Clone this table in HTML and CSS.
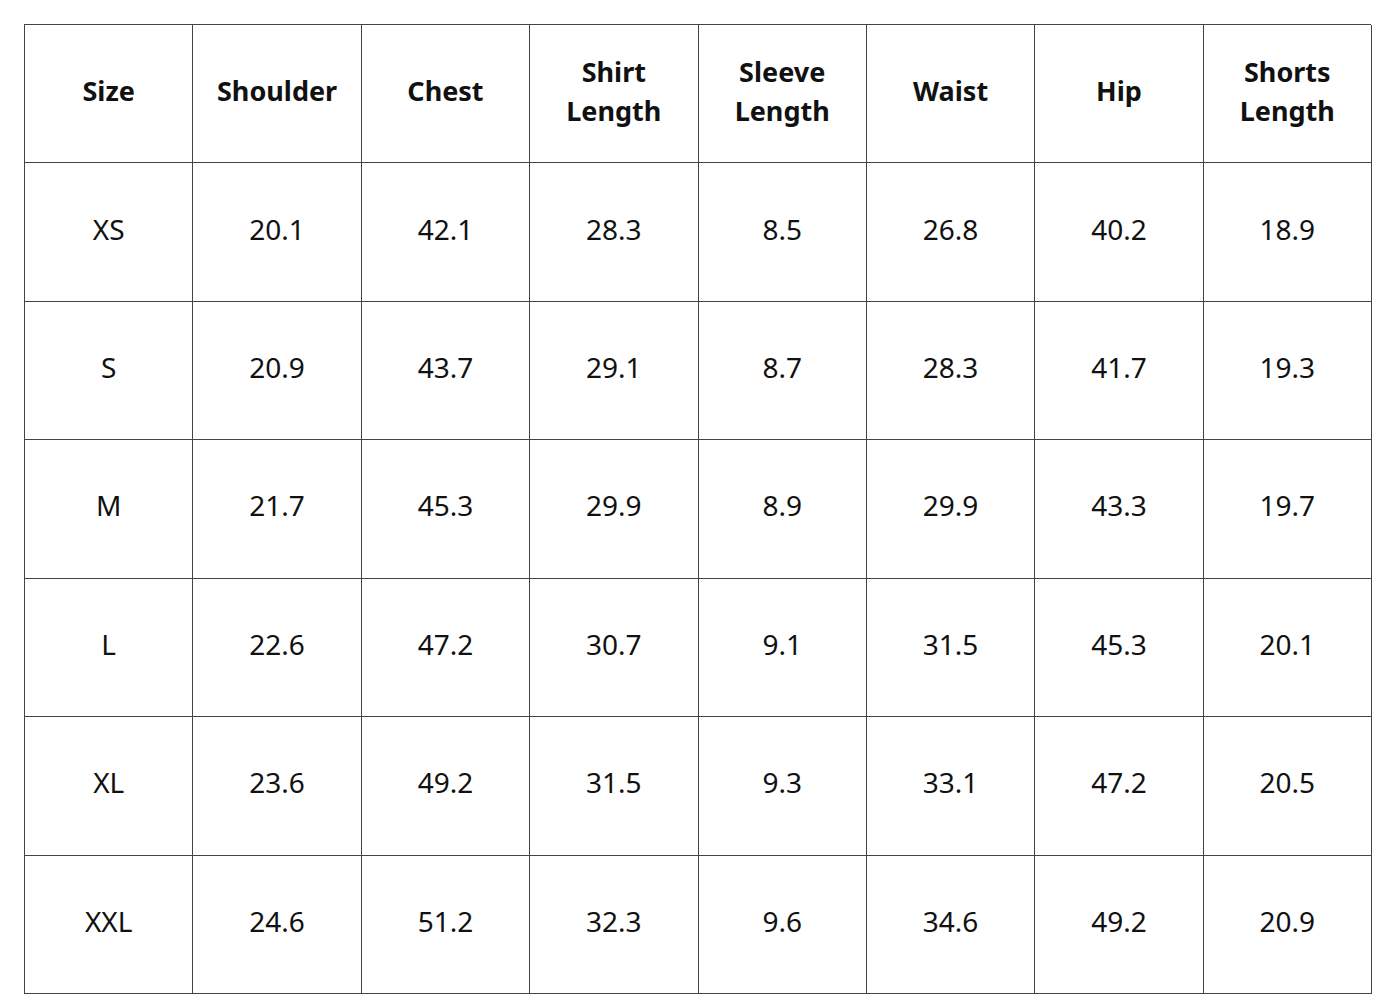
FILE: index.html
```html
<!DOCTYPE html>
<html>
<head>
<meta charset="utf-8">
<link rel="stylesheet" href="styles.css">
</head>
<body>
<div class="chart">
  <div class="cell head">Size</div>
  <div class="cell head">Shoulder</div>
  <div class="cell head">Chest</div>
  <div class="cell head">Shirt<br>Length</div>
  <div class="cell head">Sleeve<br>Length</div>
  <div class="cell head">Waist</div>
  <div class="cell head">Hip</div>
  <div class="cell head">Shorts<br>Length</div>

  <div class="cell">XS</div><div class="cell">20.1</div><div class="cell">42.1</div><div class="cell">28.3</div><div class="cell">8.5</div><div class="cell">26.8</div><div class="cell">40.2</div><div class="cell">18.9</div>
  <div class="cell">S</div><div class="cell">20.9</div><div class="cell">43.7</div><div class="cell">29.1</div><div class="cell">8.7</div><div class="cell">28.3</div><div class="cell">41.7</div><div class="cell">19.3</div>
  <div class="cell">M</div><div class="cell">21.7</div><div class="cell">45.3</div><div class="cell">29.9</div><div class="cell">8.9</div><div class="cell">29.9</div><div class="cell">43.3</div><div class="cell">19.7</div>
  <div class="cell">L</div><div class="cell">22.6</div><div class="cell">47.2</div><div class="cell">30.7</div><div class="cell">9.1</div><div class="cell">31.5</div><div class="cell">45.3</div><div class="cell">20.1</div>
  <div class="cell">XL</div><div class="cell">23.6</div><div class="cell">49.2</div><div class="cell">31.5</div><div class="cell">9.3</div><div class="cell">33.1</div><div class="cell">47.2</div><div class="cell">20.5</div>
  <div class="cell">XXL</div><div class="cell">24.6</div><div class="cell">51.2</div><div class="cell">32.3</div><div class="cell">9.6</div><div class="cell">34.6</div><div class="cell">49.2</div><div class="cell">20.9</div>
</div>
</body>
</html>
```
FILE: styles.css
```css
html, body {
  margin: 0;
  padding: 0;
  background: #ffffff;
}
body {
  padding: 24px 0 0 24px;
  font-family: "Noto Sans", "Open Sans", sans-serif;
  color: #111111;
}
.chart {
  display: grid;
  grid-template-columns: repeat(8, 168.375px);
  grid-template-rows: repeat(7, 138.43px);
  width: 1347px;
  border-top: 1px solid #444;
  border-left: 1px solid #444;
  box-sizing: border-box;
}
.cell {
  display: flex;
  align-items: center;
  justify-content: center;
  text-align: center;
  border-right: 1px solid #444;
  border-bottom: 1px solid #444;
  font-size: 28px;
  line-height: 36px;
  font-weight: 400;
  padding-bottom: 7px;
}
.head {
  font-weight: 700;
  font-size: 27px;
  line-height: 39px;
  padding-bottom: 6px;
}
```
